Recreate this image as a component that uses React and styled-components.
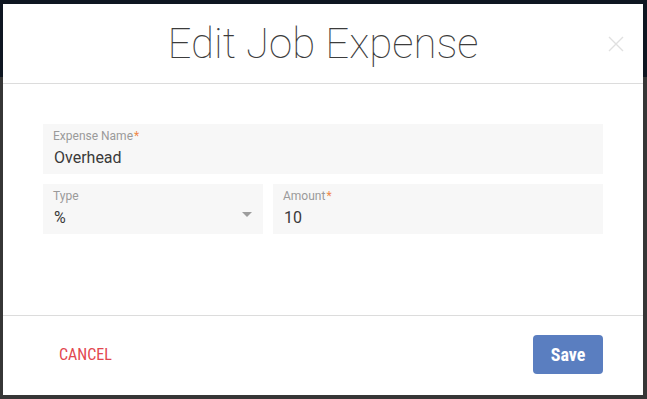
import styled, { createGlobalStyle } from "styled-components";

const GlobalStyle = createGlobalStyle`
  html, body {
    margin: 0;
    padding: 0;
    height: 100%;
  }
  body {
    font-family: Roboto, "Liberation Sans", Arial, sans-serif;
    background: linear-gradient(#0e1621 0, #0e1621 77px, #363636 77px, #363636 100%);
  }
`;

const Backdrop = styled.div`
  width: 647px;
  height: 399px;
  padding: 4px 4px 4px 3px;
  box-sizing: border-box;
`;

const Modal = styled.div`
  width: 640px;
  height: 391px;
  background: #fff;
  display: flex;
  flex-direction: column;
`;

const Header = styled.div`
  position: relative;
  height: 79px;
  border-bottom: 1px solid #dcdcdc;
  display: flex;
  align-items: center;
  justify-content: center;
`;

const Title = styled.h1`
  margin: 0;
  font-family: Roboto, sans-serif;
  font-weight: 100;
  font-size: 42px;
  color: #3c3c3c;
`;

const Close = styled.button`
  position: absolute;
  right: 19px;
  top: 32px;
  width: 16px;
  height: 16px;
  padding: 0;
  border: 0;
  background: none;
  cursor: pointer;
  svg {
    display: block;
  }
`;

const Body = styled.div`
  flex: 1;
  padding: 40px 40px 0;
  display: flex;
  flex-direction: column;
  gap: 10px;
`;

const Row = styled.div`
  display: grid;
  grid-template-columns: ${(p) => p.$cols || "1fr"};
  gap: 10px;
`;

const Field = styled.div`
  position: relative;
  height: 50px;
  box-sizing: border-box;
  background: #f7f7f7;
  padding: 5px 10px 0;
`;

const Label = styled.div`
  font-size: 12px;
  line-height: 14px;
  color: #9a9a9a;
`;

const Star = styled.span`
  color: #f0884a;
  margin-left: 1px;
`;

const Value = styled.div`
  margin-top: 5px;
  font-size: 16px;
  line-height: 20px;
  color: #3a3a3a;
  padding-left: 1px;
`;

const Caret = styled.span`
  position: absolute;
  right: 11px;
  top: 28px;
  width: 0;
  height: 0;
  border-left: 5px solid transparent;
  border-right: 5px solid transparent;
  border-top: 5px solid #9d9d9d;
`;

const Footer = styled.div`
  height: 80px;
  border-top: 1px solid #dcdcdc;
  display: flex;
  align-items: center;
  justify-content: space-between;
  padding: 0 40px 2px 56px;
  box-sizing: border-box;
`;

const CancelButton = styled.button`
  border: 0;
  background: none;
  padding: 0;
  font-family: "Liberation Sans Narrow", "Roboto Condensed", Roboto, sans-serif;
  font-size: 16px;
  color: #e2474f;
  cursor: pointer;
`;

const SaveButton = styled.button`
  width: 70px;
  height: 39px;
  border: 0;
  border-radius: 4px;
  background: #5a7ec0;
  color: #fff;
  font-family: "Liberation Sans Narrow", "Roboto Condensed", Roboto, sans-serif;
  font-weight: 700;
  font-size: 18px;
  cursor: pointer;
`;

const App = () => {
  return (
    <>
      <GlobalStyle />
      <Backdrop>
        <Modal>
          <Header>
            <Title>Edit Job Expense</Title>
            <Close aria-label="Close">
              <svg width="16" height="16" viewBox="0 0 16 16">
                <path d="M1 1L15 15M15 1L1 15" stroke="#e0e0e0" strokeWidth="1.4" />
              </svg>
            </Close>
          </Header>
          <Body>
            <Row>
              <Field>
                <Label>
                  Expense Name<Star>*</Star>
                </Label>
                <Value>Overhead</Value>
              </Field>
            </Row>
            <Row $cols="220px 1fr">
              <Field>
                <Label>Type</Label>
                <Value>%</Value>
                <Caret />
              </Field>
              <Field>
                <Label>
                  Amount<Star>*</Star>
                </Label>
                <Value>10</Value>
              </Field>
            </Row>
          </Body>
          <Footer>
            <CancelButton>CANCEL</CancelButton>
            <SaveButton>Save</SaveButton>
          </Footer>
        </Modal>
      </Backdrop>
    </>
  );
};

export default App;
